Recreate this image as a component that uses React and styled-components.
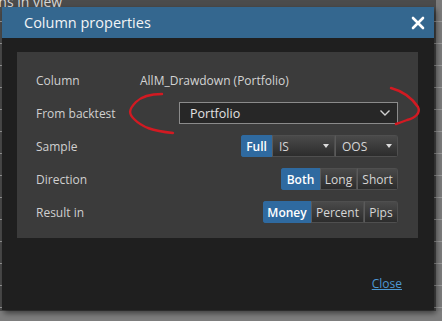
import React from "react";
import styled, { createGlobalStyle } from "styled-components";

const GlobalStyle = createGlobalStyle`
  html, body {
    margin: 0;
    padding: 0;
    background: #5d5d5d;
    font-family: "Open Sans", "Noto Sans", sans-serif;
  }
`;

const Backdrop = styled.div`
  position: relative;
  width: 442px;
  height: 321px;
  overflow: hidden;
  box-sizing: border-box;
  padding: 7px 0 0 2px;
  background:
    linear-gradient(to bottom, transparent 0px, transparent 311px, #7e7e7e 311px),
    repeating-linear-gradient(
      to bottom,
      transparent 0px,
      transparent 21px,
      #9a9a9a 21px,
      #9a9a9a 22px
    ),
    linear-gradient(to right, #4c4c4c 0px, #4c4c4c 436px, #7b7b7b 436px);
`;

const BehindTitle = styled.div`
  position: absolute;
  top: -8px;
  left: -44px;
  font-size: 14px;
  color: #d8d8d8;
  white-space: nowrap;
`;

const Modal = styled.div`
  position: relative;
  width: 432px;
  height: 303px;
  background: #1f1f1f;
  box-shadow: 2px 3px 6px rgba(0, 0, 0, 0.55);
  display: flex;
  flex-direction: column;
`;

const Header = styled.div`
  height: 31px;
  background: #34678f;
  display: flex;
  align-items: center;
  justify-content: space-between;
  padding: 0 9px 0 22px;
`;

const Title = styled.span`
  font-size: 14.5px;
  color: #f2f4f6;
`;

const CloseX = styled.svg`
  width: 14px;
  height: 14px;
`;

const Body = styled.div`
  padding: 14px 16px 0 15px;
  display: flex;
  flex-direction: column;
`;

const Panel = styled.div`
  background: #3b3b3b;
  padding: 17px 20px 15px 19px;
  display: grid;
  grid-template-columns: 104px 1fr;
  grid-auto-rows: 22px;
  row-gap: 11px;
  align-items: center;
`;

const Label = styled.span`
  font-size: 12px;
  color: #d0d0d0;
`;

const Value = styled.span`
  font-size: 12px;
  color: #d4d4d4;
`;

const Select = styled.div`
  justify-self: end;
  width: 219px;
  height: 22px;
  box-sizing: border-box;
  border: 1px solid #8b8b8b;
  background: #272727;
  display: flex;
  align-items: center;
  justify-content: space-between;
  padding: 0 6px 0 10px;
  font-size: 12.5px;
  color: #e2e2e2;
`;

const Group = styled.div`
  justify-self: end;
  display: flex;
  height: 22px;
  border-radius: 3px;
  overflow: hidden;
`;

const Btn = styled.div`
  box-sizing: border-box;
  width: ${(p) => p.w}px;
  height: 22px;
  display: flex;
  align-items: center;
  justify-content: ${(p) => (p.caret ? "space-between" : "center")};
  padding: ${(p) => (p.caret ? "0 5px 0 6px" : "0")};
  font-size: 12px;
  font-weight: ${(p) => (p.active ? 600 : 400)};
  color: ${(p) => (p.active ? "#ffffff" : "#d6d6d6")};
  background: ${(p) =>
    p.active
      ? "#2f6aa0"
      : "linear-gradient(to bottom, #4a4a4a 0%, #2c2c2c 100%)"};
  border: 1px solid ${(p) => (p.active ? "#2f6aa0" : "#4f4f4f")};
  border-left: ${(p) => (p.active ? "1px solid #2f6aa0" : "1px solid #5a5a5a")};
  &:first-child {
    border-left-color: ${(p) => (p.active ? "#2f6aa0" : "#4f4f4f")};
  }
`;

const Caret = styled.span`
  width: 0;
  height: 0;
  border-left: 3.5px solid transparent;
  border-right: 3.5px solid transparent;
  border-top: 4px solid #dcdcdc;
`;

const Footer = styled.div`
  display: flex;
  justify-content: flex-end;
  padding: 37px 16px 0 0;
`;

const CloseLink = styled.a`
  font-size: 12px;
  color: #4d97d2;
  text-decoration: underline;
  cursor: pointer;
`;

const Scribble = styled.svg`
  position: absolute;
  left: 0;
  top: 0;
  width: 442px;
  height: 321px;
  pointer-events: none;
`;

const Group3 = ({ items }) => (
  <Group>
    {items.map((b) => (
      <Btn key={b.t} w={b.w} active={b.active} caret={b.caret}>
        {b.t}
        {b.caret && <Caret />}
      </Btn>
    ))}
  </Group>
);

export default function App() {
  return (
    <>
      <GlobalStyle />
      <Backdrop>
        <BehindTitle>Columns in view</BehindTitle>
        <Modal>
          <Header>
            <Title>Column properties</Title>
            <CloseX viewBox="0 0 14 14">
              <path
                d="M2 2 L12 12 M12 2 L2 12"
                stroke="#ffffff"
                strokeWidth="2.6"
                strokeLinecap="round"
              />
            </CloseX>
          </Header>
          <Body>
            <Panel>
              <Label>Column</Label>
              <Value>AllM_Drawdown (Portfolio)</Value>

              <Label>From backtest</Label>
              <Select>
                Portfolio
                <svg width="12" height="8" viewBox="0 0 12 8">
                  <path
                    d="M1.5 1.5 L6 6 L10.5 1.5"
                    stroke="#d0d0d0"
                    strokeWidth="1.4"
                    fill="none"
                  />
                </svg>
              </Select>

              <Label>Sample</Label>
              <Group3
                items={[
                  { t: "Full", w: 31, active: true },
                  { t: "IS", w: 63, caret: true },
                  { t: "OOS", w: 63, caret: true },
                ]}
              />

              <Label>Direction</Label>
              <Group3
                items={[
                  { t: "Both", w: 39, active: true },
                  { t: "Long", w: 37 },
                  { t: "Short", w: 41 },
                ]}
              />

              <Label>Result in</Label>
              <Group3
                items={[
                  { t: "Money", w: 48, active: true },
                  { t: "Percent", w: 53 },
                  { t: "Pips", w: 34 },
                ]}
              />
            </Panel>
            <Footer>
              <CloseLink>Close</CloseLink>
            </Footer>
          </Body>
        </Modal>
        <Scribble viewBox="0 0 442 321">
          <path
            d="M162 94 C150 94 142 96 136 102 C128 110 129 114 134 119 C142 127 152 131 173 133"
            stroke="#d21a22"
            strokeWidth="2.4"
            fill="none"
            strokeLinecap="round"
          />
          <path
            d="M391 88 C402 91 412 98 418 107 C421 113 415 118 407 120 C402 122 399 123 396 124"
            stroke="#d21a22"
            strokeWidth="2.4"
            fill="none"
            strokeLinecap="round"
          />
        </Scribble>
      </Backdrop>
    </>
  );
}
